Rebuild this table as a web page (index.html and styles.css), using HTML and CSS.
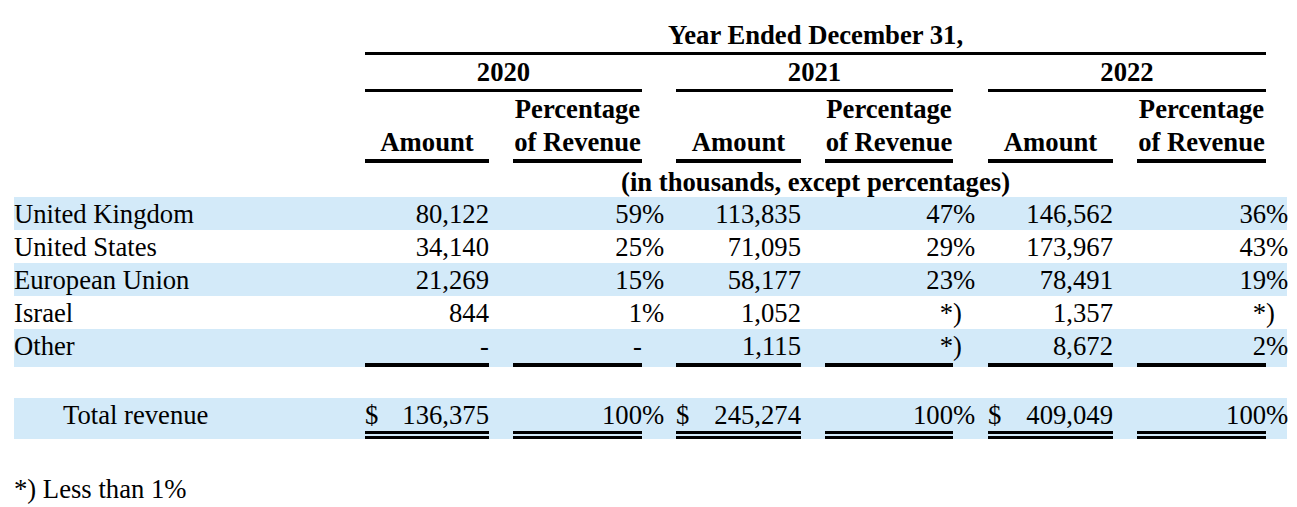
FILE: index.html
```html
<!DOCTYPE html>
<html>
<head>
<meta charset="utf-8">
<link rel="stylesheet" href="styles.css">
</head>
<body>
<div class="page">
  <table class="rev">
    <colgroup>
      <col class="col-label">
      <col class="col-a20"><col class="col-gap"><col class="col-p20"><col class="col-s20">
      <col class="col-a21"><col class="col-gap"><col class="col-p21"><col class="col-s21">
      <col class="col-a22"><col class="col-gap"><col class="col-p22"><col class="col-s22">
    </colgroup>
    <thead>
      <tr class="h-year">
        <td></td>
        <td colspan="11" class="hd rule-3 pad-year">Year Ended December 31,</td>
        <td></td>
      </tr>
      <tr class="h-yr">
        <td></td>
        <td colspan="3" class="hd rule-3 pad-yr">2020</td>
        <td></td>
        <td colspan="3" class="hd rule-3 pad-yr">2021</td>
        <td></td>
        <td colspan="3" class="hd rule-3 pad-yr">2022</td>
        <td></td>
      </tr>
      <tr class="h-col">
        <td></td>
        <td class="hd rule-4 pad-col">&nbsp;<br>Amount</td><td></td>
        <td class="hd rule-4 pad-col">Percentage<br>of Revenue</td><td></td>
        <td class="hd rule-4 pad-col">&nbsp;<br>Amount</td><td></td>
        <td class="hd rule-4 pad-col">Percentage<br>of Revenue</td><td></td>
        <td class="hd rule-4 pad-col">&nbsp;<br>Amount</td><td></td>
        <td class="hd rule-4 pad-col">Percentage<br>of Revenue</td><td></td>
      </tr>
      <tr class="h-unit">
        <td></td>
        <td colspan="11" class="hd pad-unit">(in thousands, except percentages)</td>
        <td></td>
      </tr>
    </thead>
    <tbody>
      <tr class="row shade">
        <td class="lbl">United Kingdom</td>
        <td class="num">80,122</td><td></td><td class="num">59</td><td class="sfx">%</td>
        <td class="num">113,835</td><td></td><td class="num">47</td><td class="sfx">%</td>
        <td class="num">146,562</td><td></td><td class="num">36</td><td class="sfx">%</td>
      </tr>
      <tr class="row">
        <td class="lbl">United States</td>
        <td class="num">34,140</td><td></td><td class="num">25</td><td class="sfx">%</td>
        <td class="num">71,095</td><td></td><td class="num">29</td><td class="sfx">%</td>
        <td class="num">173,967</td><td></td><td class="num">43</td><td class="sfx">%</td>
      </tr>
      <tr class="row shade">
        <td class="lbl">European Union</td>
        <td class="num">21,269</td><td></td><td class="num">15</td><td class="sfx">%</td>
        <td class="num">58,177</td><td></td><td class="num">23</td><td class="sfx">%</td>
        <td class="num">78,491</td><td></td><td class="num">19</td><td class="sfx">%</td>
      </tr>
      <tr class="row">
        <td class="lbl">Israel</td>
        <td class="num">844</td><td></td><td class="num">1</td><td class="sfx">%</td>
        <td class="num">1,052</td><td></td><td class="num">*</td><td class="sfx">)</td>
        <td class="num">1,357</td><td></td><td class="num">*</td><td class="sfx">)</td>
      </tr>
      <tr class="row shade last">
        <td class="lbl">Other</td>
        <td class="num rule-4 pad-last">-</td><td></td><td class="num rule-4 pad-last">-</td><td class="sfx"></td>
        <td class="num rule-4 pad-last">1,115</td><td></td><td class="num rule-4 pad-last">*</td><td class="sfx">)</td>
        <td class="num rule-4 pad-last">8,672</td><td></td><td class="num rule-4 pad-last">2</td><td class="sfx">%</td>
      </tr>
      <tr class="spacer"><td colspan="13"></td></tr>
      <tr class="row shade total">
        <td class="lbl indent">Total revenue</td>
        <td class="num rule-dbl"><div class="money"><span>$</span><span>136,375</span></div></td><td></td>
        <td class="num rule-dbl">100</td><td class="sfx">%</td>
        <td class="num rule-dbl"><div class="money"><span>$</span><span>245,274</span></div></td><td></td>
        <td class="num rule-dbl">100</td><td class="sfx">%</td>
        <td class="num rule-dbl"><div class="money"><span>$</span><span>409,049</span></div></td><td></td>
        <td class="num rule-dbl">100</td><td class="sfx">%</td>
      </tr>
    </tbody>
  </table>
  <p class="note">*) Less than 1%</p>
</div>
</body>
</html>
```

FILE: styles.css
```css
html, body {
  margin: 0;
  padding: 0;
  background: #ffffff;
}

.page {
  padding-left: 14px;
  font-family: "Liberation Serif", "Times New Roman", serif;
  font-size: 26.67px;
  color: #000000;
}

.rev {
  table-layout: fixed;
  width: 1273px;
  border-collapse: separate;
  border-spacing: 0;
}

.rev td {
  padding: 0;
  vertical-align: top;
  white-space: nowrap;
  line-height: 30px;
}

.col-label { width: 351px; }
.col-a20 { width: 124px; }
.col-gap { width: 24px; }
.col-p20 { width: 129px; }
.col-s20 { width: 34px; }
.col-a21 { width: 125px; }
.col-p21 { width: 128px; }
.col-s21 { width: 35px; }
.col-a22 { width: 125px; }
.col-p22 { width: 129px; }
.col-s22 { width: 21px; }

.hd {
  font-weight: bold;
  text-align: center;
}

.rule-3 { border-bottom: 3px solid #000; }
.rule-4 { border-bottom: 4px solid #000; }
.rule-dbl { border-bottom: 8px double #000; }

.pad-year { padding-top: 20px !important; padding-bottom: 2px !important; }
.pad-yr { padding-top: 2px !important; padding-bottom: 2px !important; }
.rev .pad-col { padding-top: 1px; line-height: 33px; }
.pad-unit { padding-top: 4px !important; }

.rev .row td { line-height: 32px; padding-top: 1px; }
.rev .total td { line-height: 31px; padding-top: 2px; }
.rev .shade td { background: #d3eaf9; }

.lbl { text-align: left; }
.rev .indent { padding-left: 49px; }
.num { text-align: right; }
.sfx { text-align: left; overflow: visible; }

.rev .pad-last { padding-bottom: 1px; }

.spacer td { height: 31px; line-height: 0 !important; }

.money {
  display: flex;
  justify-content: space-between;
}

.note {
  margin: 34px 0 0 0;
  line-height: 33px;
}
```
